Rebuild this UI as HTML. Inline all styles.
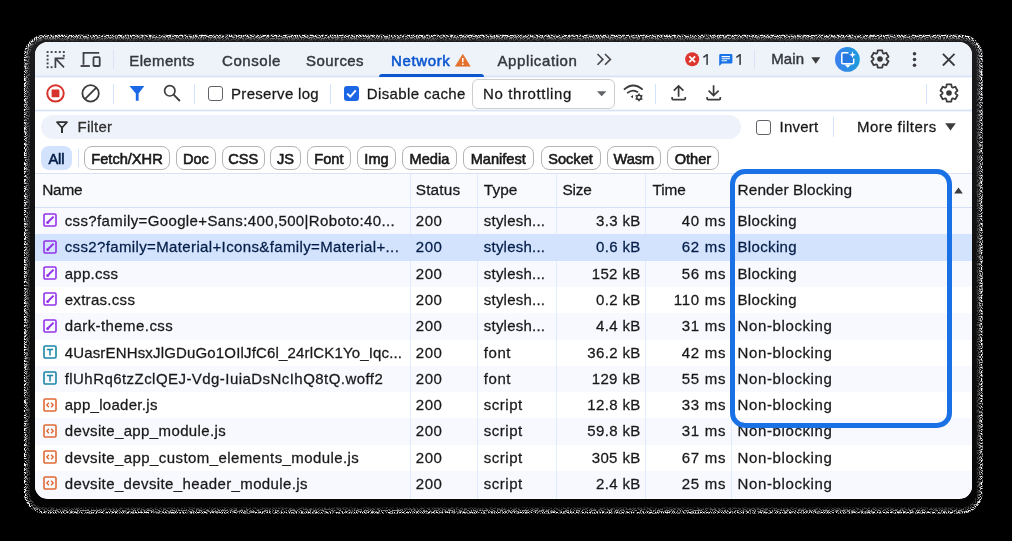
<!DOCTYPE html>
<html><head><meta charset="utf-8"><title>DevTools Network</title>
<style>
html,body{margin:0;padding:0;background:#000;}
body{width:1012px;height:541px;position:relative;overflow:hidden;font-family:"Liberation Sans",sans-serif;}
#shadow{position:absolute;left:24px;top:35px;width:958.5px;height:478px;border-radius:21px;background:linear-gradient(to bottom,#1d1d1f 0%,#161618 15%,#0a0a0b 85%,#030303 100%);}
#panel{position:absolute;left:35px;top:42px;width:937px;height:456.5px;border-radius:13px;background:#fff;overflow:hidden;}
.abs{position:absolute;}
#tabbar{left:0;top:0;width:937px;height:34px;background:#eef2f9;border-bottom:1px solid #d3e3fd;}
#toolbar{left:0;top:35px;width:937px;height:32.5px;background:#fff;border-bottom:1px solid #d3e3fd;}
.vsep{position:absolute;width:1px;background:#d3e3fd;}
.t{position:absolute;white-space:nowrap;line-height:20px;-webkit-text-stroke:0.26px currentColor;}
.pill{position:absolute;top:104px;height:22px;border:1px solid #c7c7c7;border-radius:8px;box-sizing:content-box;background:#fff;}
.row{position:absolute;left:0;width:937px;}
.cb{position:absolute;width:13px;height:13px;border:1.5px solid #5f6368;border-radius:3px;background:#fff;box-sizing:content-box;}
svg{position:absolute;overflow:visible;}
</style></head><body>
<div id="shadow"></div>
<svg style="left:0;top:0" width="1012" height="541" viewBox="0 0 1012 541">
<defs>
<filter id="nz" x="0" y="0" width="100%" height="100%" color-interpolation-filters="sRGB"><feTurbulence type="fractalNoise" baseFrequency="0.85" numOctaves="2" seed="7"/><feColorMatrix type="matrix" values="0 0 0 0 1  0 0 0 0 1  0 0 0 0 1  9 0 0 0 -4.05"/></filter>
<mask id="ring" maskUnits="userSpaceOnUse" x="0" y="0" width="1012" height="541">
<rect x="0" y="0" width="1012" height="541" fill="#000"/>
<rect x="28.6" y="39.2" width="949.3" height="469.6" rx="16.5" fill="none" stroke="#3a3a3a" stroke-width="2.4"/>
<rect x="26.6" y="37.4" width="953.3" height="473.4" rx="18.4" fill="none" stroke="#8a8a8a" stroke-width="2"/>
<rect x="24.9" y="35.8" width="956.7" height="476.8" rx="20.2" fill="none" stroke="#fff" stroke-width="1.9"/>
</mask>
</defs>
<g mask="url(#ring)"><rect x="0" y="0" width="1012" height="541" filter="url(#nz)" fill="#fff"/></g>
</svg>
<div id="panel">
<div class="abs" style="left:-35px;top:-42px;width:1012px;height:541px;will-change:transform;">
<div class="abs" style="left:35px;top:42px;width:937px;height:34.5px;background:#eef2f9;"></div>
<div class="abs" style="left:35px;top:75.0px;width:937px;height:3px;background:linear-gradient(to bottom,rgba(211,227,253,0),#d7e1f7 50%,rgba(211,227,253,0));"></div>
<div class="abs" style="left:35px;top:108.5px;width:937px;height:3px;background:linear-gradient(to bottom,rgba(211,227,253,0),#d7e1f7 50%,rgba(211,227,253,0));"></div>
<div class="abs" style="left:378.5px;top:74px;width:105.5px;height:3px;background:#0b57d0;border-radius:3px 3px 0 0;"></div>
<div class="vsep" style="left:113px;top:50px;height:19px;background:#d9e2f6"></div>
<div class="vsep" style="left:754px;top:50px;height:19px;background:#d9e2f6"></div>
<div class="vsep" style="left:113px;top:84px;height:20px;"></div>
<div class="vsep" style="left:194px;top:84px;height:20px;"></div>
<div class="vsep" style="left:330px;top:84px;height:20px;"></div>
<div class="vsep" style="left:655px;top:84px;height:20px;"></div>
<div class="vsep" style="left:926px;top:84px;height:20px;"></div>
<div class="vsep" style="left:833px;top:117px;height:20px;"></div>
<div class="vsep" style="left:78px;top:149px;height:18px;"></div>
<div class="abs" style="left:41px;top:115px;width:700px;height:24px;border-radius:12px;background:#eef2fa;"></div>
<div class="abs" style="left:471.75px;top:78.75px;width:141px;height:28px;border:1px solid #cbcdd1;border-radius:6px;background:#fff;"></div>
<div class="cb" style="left:208px;top:86px;"></div>
<div class="abs" style="left:343.75px;top:86px;width:15px;height:15px;border-radius:3px;background:#1b66e4;"></div>
<svg style="left:343.75px;top:86px" width="15" height="15" viewBox="0 0 15 15"><path d="M3.2 7.6 L6.3 10.6 L11.8 4.4" fill="none" stroke="#fff" stroke-width="2"/></svg>
<div class="cb" style="left:756px;top:119.5px;"></div>
<div class="abs" style="left:41px;top:146px;width:31px;height:24px;border-radius:8px;background:#d3e3fd;"></div>
<div class="abs" style="left:84px;top:146px;width:84px;height:22px;border:1px solid #b4b4b4;border-radius:8px;background:#fff;"></div>
<div class="abs" style="left:175.75px;top:146px;width:38.25px;height:22px;border:1px solid #b4b4b4;border-radius:8px;background:#fff;"></div>
<div class="abs" style="left:222px;top:146px;width:40.5px;height:22px;border:1px solid #b4b4b4;border-radius:8px;background:#fff;"></div>
<div class="abs" style="left:270px;top:146px;width:29px;height:22px;border:1px solid #b4b4b4;border-radius:8px;background:#fff;"></div>
<div class="abs" style="left:306.75px;top:146px;width:42.25px;height:22px;border:1px solid #b4b4b4;border-radius:8px;background:#fff;"></div>
<div class="abs" style="left:357px;top:146px;width:37px;height:22px;border:1px solid #b4b4b4;border-radius:8px;background:#fff;"></div>
<div class="abs" style="left:402px;top:146px;width:52.75px;height:22px;border:1px solid #b4b4b4;border-radius:8px;background:#fff;"></div>
<div class="abs" style="left:462.5px;top:146px;width:69.5px;height:22px;border:1px solid #b4b4b4;border-radius:8px;background:#fff;"></div>
<div class="abs" style="left:540.5px;top:146px;width:58.0px;height:22px;border:1px solid #b4b4b4;border-radius:8px;background:#fff;"></div>
<div class="abs" style="left:606.75px;top:146px;width:52.25px;height:22px;border:1px solid #b4b4b4;border-radius:8px;background:#fff;"></div>
<div class="abs" style="left:666.75px;top:146px;width:50.25px;height:22px;border:1px solid #b4b4b4;border-radius:8px;background:#fff;"></div>
<div class="abs" style="left:35px;top:173px;width:937px;height:1px;background:#d9e2f7;"></div>
<div class="abs" style="left:35px;top:174px;width:937px;height:33.3px;background:#f8fafd;"></div>
<div class="abs" style="left:35px;top:207.2px;width:937px;height:1px;background:#d6dff3;"></div>
<div class="abs" style="left:35px;top:208.00px;width:937px;height:26.60px;background:#f8f9fe;"></div>
<div class="abs" style="left:35px;top:234.30px;width:937px;height:26.60px;background:#d3e3fd;"></div>
<div class="abs" style="left:35px;top:260.60px;width:937px;height:26.60px;background:#f8f9fe;"></div>
<div class="abs" style="left:35px;top:286.90px;width:937px;height:26.60px;background:#ffffff;"></div>
<div class="abs" style="left:35px;top:313.20px;width:937px;height:26.60px;background:#f8f9fe;"></div>
<div class="abs" style="left:35px;top:339.50px;width:937px;height:26.60px;background:#ffffff;"></div>
<div class="abs" style="left:35px;top:365.80px;width:937px;height:26.60px;background:#f8f9fe;"></div>
<div class="abs" style="left:35px;top:392.10px;width:937px;height:26.60px;background:#ffffff;"></div>
<div class="abs" style="left:35px;top:418.40px;width:937px;height:26.60px;background:#f8f9fe;"></div>
<div class="abs" style="left:35px;top:444.70px;width:937px;height:26.60px;background:#ffffff;"></div>
<div class="abs" style="left:35px;top:471.00px;width:937px;height:26.60px;background:#f8f9fe;"></div>
<div class="vsep" style="left:409.5px;top:174px;height:330px;background:#d3e3fd;opacity:.65"></div>
<div class="vsep" style="left:477.0px;top:174px;height:330px;background:#d3e3fd;opacity:.65"></div>
<div class="vsep" style="left:556.0px;top:174px;height:330px;background:#d3e3fd;opacity:.65"></div>
<div class="vsep" style="left:645.25px;top:174px;height:330px;background:#d3e3fd;opacity:.65"></div>
<div class="vsep" style="left:730.5px;top:174px;height:330px;background:#d3e3fd;opacity:.65"></div>
<svg style="left:43.3px;top:213.40px" width="14" height="14" viewBox="0 0 14 14"><rect x="1" y="1" width="12" height="12" rx="1.3" fill="none" stroke="#9233ea" stroke-width="1.6"/><path d="M5.4 8.8 L10.6 3.6" stroke="#9233ea" stroke-width="2" fill="none"/><circle cx="4.7" cy="9.6" r="1.5" fill="#9233ea"/></svg>
<svg style="left:43.3px;top:239.70px" width="14" height="14" viewBox="0 0 14 14"><rect x="1" y="1" width="12" height="12" rx="1.3" fill="none" stroke="#9233ea" stroke-width="1.6"/><path d="M5.4 8.8 L10.6 3.6" stroke="#9233ea" stroke-width="2" fill="none"/><circle cx="4.7" cy="9.6" r="1.5" fill="#9233ea"/></svg>
<svg style="left:43.3px;top:266.00px" width="14" height="14" viewBox="0 0 14 14"><rect x="1" y="1" width="12" height="12" rx="1.3" fill="none" stroke="#9233ea" stroke-width="1.6"/><path d="M5.4 8.8 L10.6 3.6" stroke="#9233ea" stroke-width="2" fill="none"/><circle cx="4.7" cy="9.6" r="1.5" fill="#9233ea"/></svg>
<svg style="left:43.3px;top:292.30px" width="14" height="14" viewBox="0 0 14 14"><rect x="1" y="1" width="12" height="12" rx="1.3" fill="none" stroke="#9233ea" stroke-width="1.6"/><path d="M5.4 8.8 L10.6 3.6" stroke="#9233ea" stroke-width="2" fill="none"/><circle cx="4.7" cy="9.6" r="1.5" fill="#9233ea"/></svg>
<svg style="left:43.3px;top:318.60px" width="14" height="14" viewBox="0 0 14 14"><rect x="1" y="1" width="12" height="12" rx="1.3" fill="none" stroke="#9233ea" stroke-width="1.6"/><path d="M5.4 8.8 L10.6 3.6" stroke="#9233ea" stroke-width="2" fill="none"/><circle cx="4.7" cy="9.6" r="1.5" fill="#9233ea"/></svg>
<svg style="left:43.3px;top:344.90px" width="14" height="14" viewBox="0 0 14 14"><rect x="1" y="1" width="12" height="12" rx="1.3" fill="none" stroke="#1a86a6" stroke-width="1.6"/><path d="M3.9 4.5 H10.1 M7 4.5 V10.6" stroke="#1a86a6" stroke-width="1.5" fill="none"/></svg>
<svg style="left:43.3px;top:371.20px" width="14" height="14" viewBox="0 0 14 14"><rect x="1" y="1" width="12" height="12" rx="1.3" fill="none" stroke="#1a86a6" stroke-width="1.6"/><path d="M3.9 4.5 H10.1 M7 4.5 V10.6" stroke="#1a86a6" stroke-width="1.5" fill="none"/></svg>
<svg style="left:43.3px;top:397.50px" width="14" height="14" viewBox="0 0 14 14"><rect x="1" y="1" width="12" height="12" rx="1.3" fill="none" stroke="#df6a36" stroke-width="1.6"/><path d="M5.9 4.8 L3.8 7 L5.9 9.2 M8.1 4.8 L10.2 7 L8.1 9.2" stroke="#df6a36" stroke-width="1.4" fill="none"/></svg>
<svg style="left:43.3px;top:423.80px" width="14" height="14" viewBox="0 0 14 14"><rect x="1" y="1" width="12" height="12" rx="1.3" fill="none" stroke="#df6a36" stroke-width="1.6"/><path d="M5.9 4.8 L3.8 7 L5.9 9.2 M8.1 4.8 L10.2 7 L8.1 9.2" stroke="#df6a36" stroke-width="1.4" fill="none"/></svg>
<svg style="left:43.3px;top:450.10px" width="14" height="14" viewBox="0 0 14 14"><rect x="1" y="1" width="12" height="12" rx="1.3" fill="none" stroke="#df6a36" stroke-width="1.6"/><path d="M5.9 4.8 L3.8 7 L5.9 9.2 M8.1 4.8 L10.2 7 L8.1 9.2" stroke="#df6a36" stroke-width="1.4" fill="none"/></svg>
<svg style="left:43.3px;top:476.40px" width="14" height="14" viewBox="0 0 14 14"><rect x="1" y="1" width="12" height="12" rx="1.3" fill="none" stroke="#df6a36" stroke-width="1.6"/><path d="M5.9 4.8 L3.8 7 L5.9 9.2 M8.1 4.8 L10.2 7 L8.1 9.2" stroke="#df6a36" stroke-width="1.4" fill="none"/></svg>
<!-- inspect/select icon -->
<svg style="left:46px;top:50px" width="20" height="19" viewBox="0 0 20 19"><rect x="0.65" y="1.05" width="1.9" height="1.9" fill="#3f4145"/><rect x="4.65" y="1.05" width="1.9" height="1.9" fill="#3f4145"/><rect x="8.75" y="1.05" width="1.9" height="1.9" fill="#3f4145"/><rect x="12.85" y="1.05" width="1.9" height="1.9" fill="#3f4145"/><rect x="16.85" y="1.05" width="1.9" height="1.9" fill="#3f4145"/><rect x="0.65" y="4.85" width="1.9" height="1.9" fill="#3f4145"/><rect x="0.65" y="8.65" width="1.9" height="1.9" fill="#3f4145"/><rect x="0.65" y="12.45" width="1.9" height="1.9" fill="#3f4145"/><rect x="0.65" y="16.25" width="1.9" height="1.9" fill="#3f4145"/><rect x="16.85" y="4.85" width="1.9" height="1.9" fill="#3f4145"/><rect x="4.65" y="16.25" width="1.9" height="1.9" fill="#3f4145"/><path d="M18.4 8.4 H9.4 V17.9 M9.6 8.6 L18 17.4" fill="none" stroke="#3f4145" stroke-width="1.7"/></svg>
<!-- device icon -->
<svg style="left:80px;top:51px" width="22" height="17" viewBox="0 0 22 17"><path d="M19.2 1.9 H3.5 V13.8" fill="none" stroke="#3f4145" stroke-width="1.8"/><path d="M0.6 15 H9.8" fill="none" stroke="#3f4145" stroke-width="1.9"/><rect x="13.5" y="6.1" width="6.2" height="8.9" rx="0.8" fill="none" stroke="#3f4145" stroke-width="1.8"/></svg>
<!-- record -->
<svg style="left:45px;top:83px" width="21" height="21" viewBox="0 0 21 21"><circle cx="10.5" cy="10.4" r="8.2" fill="none" stroke="#d8322c" stroke-width="2"/><rect x="6.6" y="6.5" width="7.8" height="7.8" rx="0.6" fill="#d8322c"/></svg>
<!-- clear -->
<svg style="left:80px;top:83px" width="21" height="21" viewBox="0 0 21 21"><circle cx="10.6" cy="10.4" r="8.2" fill="none" stroke="#3c3c3c" stroke-width="1.8"/><path d="M4.9 16.1 L16.3 4.7" stroke="#3c3c3c" stroke-width="1.8"/></svg>
<!-- funnel filled -->
<svg style="left:129px;top:85px" width="16" height="17" viewBox="0 0 16 17"><path d="M0.5 1 H15.3 L9.6 8.6 V15.8 H6.8 V8.6 Z" fill="#1a68e8"/></svg>
<!-- search -->
<svg style="left:163px;top:84px" width="19" height="19" viewBox="0 0 19 19"><circle cx="6.8" cy="6.8" r="5.2" fill="none" stroke="#3c3c3c" stroke-width="1.7"/><path d="M10.6 10.6 L16.9 17" stroke="#3c3c3c" stroke-width="1.8"/></svg>
<!-- more tabs >> -->
<svg style="left:596px;top:53px" width="17" height="13" viewBox="0 0 17 13"><path d="M1.5 1 L6.9 6.4 L1.5 11.8 M9 1 L14.4 6.4 L9 11.8" fill="none" stroke="#474747" stroke-width="1.6"/></svg>
<!-- error -->
<svg style="left:685px;top:51.6px" width="15" height="15" viewBox="0 0 15 15"><circle cx="7.2" cy="7.2" r="7" fill="#dc362e"/><path d="M4.3 4.3 L10.1 10.1 M10.1 4.3 L4.3 10.1" stroke="#fff" stroke-width="1.7"/></svg>
<!-- message -->
<svg style="left:719px;top:53.5px" width="14" height="13" viewBox="0 0 14 13"><path d="M1.4 0 H12.2 Q13.4 0 13.4 1.2 V8.2 Q13.4 9.4 12.2 9.4 H3 L0.2 12 V1.2 Q0.2 0 1.4 0 Z" fill="#1a73e8"/><path d="M2.6 2.6 H11 M2.6 4.7 H11 M2.6 6.8 H8" stroke="#fff" stroke-width="1.1"/></svg>
<!-- Main caret -->
<svg style="left:811.2px;top:56.8px" width="10" height="7" viewBox="0 0 10 7"><path d="M0.3 0.2 H9.3 L4.8 6.8 Z" fill="#3c3c3c"/></svg>
<!-- AI assistance circle -->
<svg style="left:834.5px;top:47px" width="24.8" height="24.8" viewBox="0 0 25.2 25.2"><defs><linearGradient id="aig" x1="0" y1="0" x2="1" y2="0"><stop offset="0" stop-color="#3d80ee"/><stop offset="1" stop-color="#1c9bdc"/></linearGradient></defs><circle cx="12.6" cy="12.6" r="12.6" fill="url(#aig)"/><rect x="7.6" y="6.6" width="11" height="10" fill="#1f5fd6" opacity=".45"/><path d="M13.6 5.8 H7.9 Q6.9 5.8 6.9 6.8 V16 Q6.9 17 7.9 17 H18 Q19 17 19 16 V11.6" fill="none" stroke="#fff" stroke-width="1.5"/><path d="M9.7 17.8 H16.3 L13 21 Z" fill="#fff"/><path d="M17.8 4.4 L18.7 7 L21.3 7.9 L18.7 8.8 L17.8 11.4 L16.9 8.8 L14.3 7.9 L16.9 7 Z" fill="#fff"/></svg>
<!-- gears -->
<svg style="left:867.6px;top:47.4px" width="24" height="24" viewBox="0 0 24 24"><path d="M14.75 6.11 L14.29 3.45 L9.71 3.45 L9.25 6.11 L8.27 6.68 L5.74 5.74 L3.45 9.71 L5.52 11.43 L5.52 12.57 L3.45 14.29 L5.74 18.26 L8.27 17.32 L9.25 17.89 L9.71 20.55 L14.29 20.55 L14.75 17.89 L15.73 17.32 L18.26 18.26 L20.55 14.29 L18.48 12.57 L18.48 11.43 L20.55 9.71 L18.26 5.74 L15.73 6.68 Z" fill="none" stroke="#3a3a3c" stroke-width="1.75" stroke-linejoin="round"/><circle cx="12" cy="12" r="2.8" fill="#3a3a3c"/></svg>
<svg style="left:936.6px;top:81.4px" width="24" height="24" viewBox="0 0 24 24"><path d="M14.75 6.11 L14.29 3.45 L9.71 3.45 L9.25 6.11 L8.27 6.68 L5.74 5.74 L3.45 9.71 L5.52 11.43 L5.52 12.57 L3.45 14.29 L5.74 18.26 L8.27 17.32 L9.25 17.89 L9.71 20.55 L14.29 20.55 L14.75 17.89 L15.73 17.32 L18.26 18.26 L20.55 14.29 L18.48 12.57 L18.48 11.43 L20.55 9.71 L18.26 5.74 L15.73 6.68 Z" fill="none" stroke="#3a3a3c" stroke-width="1.75" stroke-linejoin="round"/><circle cx="12" cy="12" r="2.8" fill="#3a3a3c"/></svg>
<!-- kebab -->
<svg style="left:912px;top:52px" width="5" height="16" viewBox="0 0 5 16"><circle cx="2.5" cy="1.7" r="1.75" fill="#3a3a3c"/><circle cx="2.5" cy="7.4" r="1.75" fill="#3a3a3c"/><circle cx="2.5" cy="13.2" r="1.75" fill="#3a3a3c"/></svg>
<!-- close -->
<svg style="left:942px;top:52.6px" width="14" height="14" viewBox="0 0 14 14"><path d="M0.9 0.9 L12.5 12.5 M12.5 0.9 L0.9 12.5" stroke="#3a3a3c" stroke-width="1.8"/></svg>
<!-- select caret -->
<svg style="left:597px;top:91px" width="10" height="6" viewBox="0 0 10 6"><path d="M0 0.2 H9.4 L4.7 5.2 Z" fill="#5f6368"/></svg>
<!-- wifi settings -->
<svg style="left:622.5px;top:84px" width="21" height="17" viewBox="0 0 21 17"><path d="M0.9 5.6 Q10.3 -2.6 19.7 5.6" fill="none" stroke="#3a3a3c" stroke-width="1.7"/><path d="M4.2 9.2 Q9.6 4.4 15 8.2" fill="none" stroke="#3a3a3c" stroke-width="1.7"/><path d="M7.6 12.7 L10 11.1 V14.3 Z" fill="#3a3a3c"/><circle cx="16" cy="13.4" r="2.2" fill="none" stroke="#3a3a3c" stroke-width="1.5"/><path d="M16 9.5 V10.9 M16 15.9 V17.3 M12.6 11.45 L13.8 12.15 M18.2 14.65 L19.4 15.35 M12.6 15.35 L13.8 14.65 M18.2 12.15 L19.4 11.45" stroke="#3a3a3c" stroke-width="1.6"/></svg>
<!-- upload -->
<svg style="left:671px;top:85px" width="16" height="16" viewBox="0 0 16 16"><path d="M7.6 11.7 V1.4 M2.8 5.6 L7.6 0.9 L12.4 5.6" fill="none" stroke="#3a3a3c" stroke-width="1.7"/><path d="M1.1 12 V13.6 Q1.1 14.6 2.1 14.6 H13.3 Q14.3 14.6 14.3 13.6 V12" fill="none" stroke="#3a3a3c" stroke-width="1.7"/></svg>
<!-- download -->
<svg style="left:706px;top:85px" width="16" height="16" viewBox="0 0 16 16"><path d="M7.6 0.2 V10 M2.6 5.6 L7.6 10.5 L12.6 5.6" fill="none" stroke="#3a3a3c" stroke-width="1.7"/><path d="M1.1 12 V13.6 Q1.1 14.6 2.1 14.6 H13.3 Q14.3 14.6 14.3 13.6 V12" fill="none" stroke="#3a3a3c" stroke-width="1.7"/></svg>
<!-- warning triangle -->
<svg style="left:455px;top:54px" width="16" height="13" viewBox="0 0 16 13"><path d="M7.8 0.3 L15.2 12.2 H0.4 Z" fill="#e4702d" stroke="#e4702d" stroke-width="0.6" stroke-linejoin="round"/><path d="M7.8 4 V8.2" stroke="#fff" stroke-width="1.5"/><circle cx="7.8" cy="10.2" r="0.9" fill="#fff"/></svg>
<!-- filter outline funnel -->
<svg style="left:56px;top:121px" width="12" height="13" viewBox="0 0 12 13"><path d="M1 1.1 H11 L6 6.8 Z" fill="none" stroke="#303030" stroke-width="1.7" stroke-linejoin="round"/><path d="M6 6.4 V12" stroke="#303030" stroke-width="2"/></svg>
<!-- more filters caret -->
<svg style="left:945px;top:123px" width="11" height="8" viewBox="0 0 11 8"><path d="M0.2 0.2 H10.8 L5.5 7.6 Z" fill="#3c3c3c"/></svg>
<!-- sort arrow -->
<svg style="left:954px;top:187.2px" width="9" height="7" viewBox="0 0 9 7"><path d="M4.5 0.4 L8.8 6.6 H0.2 Z" fill="#3c3c3c"/></svg>
<!-- counters -->
<svg style="left:703px;top:53.8px" width="6" height="11" viewBox="0 0 6 11"><path d="M0.4 3.3 L3.7 0.9" stroke="#34373c" stroke-width="1.5" fill="none"/><rect x="3.35" y="0" width="1.5" height="10.9" fill="#34373c"/></svg>
<svg style="left:735.8px;top:53.8px" width="6" height="11" viewBox="0 0 6 11"><path d="M0.4 3.3 L3.7 0.9" stroke="#34373c" stroke-width="1.5" fill="none"/><rect x="3.35" y="0" width="1.5" height="10.9" fill="#34373c"/></svg>

<div class="t" style="top:50.50px;font-size:15px;color:#34373c;-webkit-text-stroke:0.42px currentColor;letter-spacing:0.359px;left:129.30px;">Elements</div>
<div class="t" style="top:50.50px;font-size:15px;color:#34373c;-webkit-text-stroke:0.42px currentColor;letter-spacing:0.565px;left:222.00px;">Console</div>
<div class="t" style="top:50.50px;font-size:15px;color:#34373c;-webkit-text-stroke:0.42px currentColor;letter-spacing:0.424px;left:306.00px;">Sources</div>
<div class="t" style="top:50.50px;font-size:15px;color:#0b57d0;-webkit-text-stroke:0.55px currentColor;letter-spacing:0.641px;left:391.00px;">Network</div>
<div class="t" style="top:50.50px;font-size:15px;color:#34373c;-webkit-text-stroke:0.42px currentColor;letter-spacing:0.601px;left:497.50px;">Application</div>
<div class="t" style="top:49.30px;font-size:15px;color:#34373c;-webkit-text-stroke:0.42px currentColor;letter-spacing:0.071px;left:771.30px;">Main</div>
<div class="t" style="top:84.10px;font-size:15px;color:#191919;letter-spacing:0.315px;left:231.00px;">Preserve log</div>
<div class="t" style="top:84.10px;font-size:15px;color:#191919;letter-spacing:0.368px;left:366.75px;">Disable cache</div>
<div class="t" style="top:84.10px;font-size:15px;color:#191919;letter-spacing:0.625px;left:483.00px;">No throttling</div>
<div class="t" style="top:117.30px;font-size:15px;color:#303030;letter-spacing:0.243px;left:77.50px;">Filter</div>
<div class="t" style="top:117.30px;font-size:15px;color:#191919;letter-spacing:0.247px;left:779.50px;">Invert</div>
<div class="t" style="top:117.30px;font-size:15px;color:#191919;letter-spacing:0.451px;left:857.00px;">More filters</div>
<div class="t" style="top:148.54px;font-size:14.6px;color:#041e49;-webkit-text-stroke:0.6px currentColor;left:-43.50px;width:200px;text-align:center;">All</div>
<div class="t" style="top:148.54px;font-size:14.6px;color:#191919;-webkit-text-stroke:0.6px currentColor;left:27.00px;width:200px;text-align:center;">Fetch/XHR</div>
<div class="t" style="top:148.54px;font-size:14.6px;color:#191919;-webkit-text-stroke:0.6px currentColor;left:95.88px;width:200px;text-align:center;">Doc</div>
<div class="t" style="top:148.54px;font-size:14.6px;color:#191919;-webkit-text-stroke:0.6px currentColor;left:143.25px;width:200px;text-align:center;">CSS</div>
<div class="t" style="top:148.54px;font-size:14.6px;color:#191919;-webkit-text-stroke:0.6px currentColor;left:185.50px;width:200px;text-align:center;">JS</div>
<div class="t" style="top:148.54px;font-size:14.6px;color:#191919;-webkit-text-stroke:0.6px currentColor;left:228.88px;width:200px;text-align:center;">Font</div>
<div class="t" style="top:148.54px;font-size:14.6px;color:#191919;-webkit-text-stroke:0.6px currentColor;left:276.50px;width:200px;text-align:center;">Img</div>
<div class="t" style="top:148.54px;font-size:14.6px;color:#191919;-webkit-text-stroke:0.6px currentColor;left:329.38px;width:200px;text-align:center;">Media</div>
<div class="t" style="top:148.54px;font-size:14.6px;color:#191919;-webkit-text-stroke:0.6px currentColor;left:398.25px;width:200px;text-align:center;">Manifest</div>
<div class="t" style="top:148.54px;font-size:14.6px;color:#191919;-webkit-text-stroke:0.6px currentColor;left:470.50px;width:200px;text-align:center;">Socket</div>
<div class="t" style="top:148.54px;font-size:14.6px;color:#191919;-webkit-text-stroke:0.6px currentColor;left:533.88px;width:200px;text-align:center;">Wasm</div>
<div class="t" style="top:148.54px;font-size:14.6px;color:#191919;-webkit-text-stroke:0.6px currentColor;left:592.88px;width:200px;text-align:center;">Other</div>
<div class="t" style="top:180.36px;font-size:15.4px;color:#191919;letter-spacing:-0.191px;left:42.20px;">Name</div>
<div class="t" style="top:180.36px;font-size:15.4px;color:#191919;letter-spacing:0.193px;left:415.70px;">Status</div>
<div class="t" style="top:180.36px;font-size:15.4px;color:#191919;letter-spacing:0.081px;left:483.75px;">Type</div>
<div class="t" style="top:180.36px;font-size:15.4px;color:#191919;letter-spacing:-0.188px;left:562.50px;">Size</div>
<div class="t" style="top:180.36px;font-size:15.4px;color:#191919;letter-spacing:-0.110px;left:652.50px;">Time</div>
<div class="t" style="top:180.36px;font-size:15.4px;color:#191919;letter-spacing:0.118px;left:737.50px;">Render Blocking</div>
<div class="t" style="top:211.00px;font-size:15px;color:#191919;letter-spacing:0.381px;left:64.70px;">css?family=Google+Sans:400,500|Roboto:40...</div>
<div class="t" style="top:211.00px;font-size:15px;color:#191919;letter-spacing:0.573px;left:415.75px;">200</div>
<div class="t" style="top:211.00px;font-size:15px;color:#191919;letter-spacing:0.231px;left:483.75px;">stylesh...</div>
<div class="t" style="top:211.00px;font-size:15px;color:#191919;letter-spacing:0.354px;right:371.35px;">3.3 kB</div>
<div class="t" style="top:211.00px;font-size:15px;color:#191919;letter-spacing:0.735px;right:285.76px;">40 ms</div>
<div class="t" style="top:211.00px;font-size:15px;color:#191919;letter-spacing:0.350px;left:737.50px;">Blocking</div>
<div class="t" style="top:237.30px;font-size:15px;color:#041e49;letter-spacing:0.367px;left:64.70px;">css2?family=Material+Icons&amp;family=Material+...</div>
<div class="t" style="top:237.30px;font-size:15px;color:#041e49;letter-spacing:0.573px;left:415.75px;">200</div>
<div class="t" style="top:237.30px;font-size:15px;color:#041e49;letter-spacing:0.231px;left:483.75px;">stylesh...</div>
<div class="t" style="top:237.30px;font-size:15px;color:#041e49;letter-spacing:0.354px;right:371.35px;">0.6 kB</div>
<div class="t" style="top:237.30px;font-size:15px;color:#041e49;letter-spacing:0.735px;right:285.76px;">62 ms</div>
<div class="t" style="top:237.30px;font-size:15px;color:#041e49;letter-spacing:0.350px;left:737.50px;">Blocking</div>
<div class="t" style="top:263.60px;font-size:15px;color:#191919;letter-spacing:0.257px;left:64.70px;">app.css</div>
<div class="t" style="top:263.60px;font-size:15px;color:#191919;letter-spacing:0.573px;left:415.75px;">200</div>
<div class="t" style="top:263.60px;font-size:15px;color:#191919;letter-spacing:0.231px;left:483.75px;">stylesh...</div>
<div class="t" style="top:263.60px;font-size:15px;color:#191919;letter-spacing:0.389px;right:371.31px;">152 kB</div>
<div class="t" style="top:263.60px;font-size:15px;color:#191919;letter-spacing:0.735px;right:285.76px;">56 ms</div>
<div class="t" style="top:263.60px;font-size:15px;color:#191919;letter-spacing:0.350px;left:737.50px;">Blocking</div>
<div class="t" style="top:289.90px;font-size:15px;color:#191919;letter-spacing:0.298px;left:64.70px;">extras.css</div>
<div class="t" style="top:289.90px;font-size:15px;color:#191919;letter-spacing:0.573px;left:415.75px;">200</div>
<div class="t" style="top:289.90px;font-size:15px;color:#191919;letter-spacing:0.231px;left:483.75px;">stylesh...</div>
<div class="t" style="top:289.90px;font-size:15px;color:#191919;letter-spacing:0.354px;right:371.35px;">0.2 kB</div>
<div class="t" style="top:289.90px;font-size:15px;color:#191919;letter-spacing:0.721px;right:285.78px;">110 ms</div>
<div class="t" style="top:289.90px;font-size:15px;color:#191919;letter-spacing:0.350px;left:737.50px;">Blocking</div>
<div class="t" style="top:316.20px;font-size:15px;color:#191919;letter-spacing:0.425px;left:64.70px;">dark-theme.css</div>
<div class="t" style="top:316.20px;font-size:15px;color:#191919;letter-spacing:0.573px;left:415.75px;">200</div>
<div class="t" style="top:316.20px;font-size:15px;color:#191919;letter-spacing:0.231px;left:483.75px;">stylesh...</div>
<div class="t" style="top:316.20px;font-size:15px;color:#191919;letter-spacing:0.354px;right:371.35px;">4.4 kB</div>
<div class="t" style="top:316.20px;font-size:15px;color:#191919;letter-spacing:0.735px;right:285.76px;">31 ms</div>
<div class="t" style="top:316.20px;font-size:15px;color:#191919;letter-spacing:0.621px;left:737.50px;">Non-blocking</div>
<div class="t" style="top:342.50px;font-size:15px;color:#191919;letter-spacing:0.165px;left:64.70px;">4UasrENHsxJlGDuGo1OIlJfC6l_24rlCK1Yo_Iqc...</div>
<div class="t" style="top:342.50px;font-size:15px;color:#191919;letter-spacing:0.573px;left:415.75px;">200</div>
<div class="t" style="top:342.50px;font-size:15px;color:#191919;letter-spacing:0.563px;left:483.75px;">font</div>
<div class="t" style="top:342.50px;font-size:15px;color:#191919;letter-spacing:0.363px;right:371.34px;">36.2 kB</div>
<div class="t" style="top:342.50px;font-size:15px;color:#191919;letter-spacing:0.735px;right:285.76px;">42 ms</div>
<div class="t" style="top:342.50px;font-size:15px;color:#191919;letter-spacing:0.621px;left:737.50px;">Non-blocking</div>
<div class="t" style="top:368.80px;font-size:15px;color:#191919;letter-spacing:0.446px;left:64.70px;">flUhRq6tzZclQEJ-Vdg-IuiaDsNcIhQ8tQ.woff2</div>
<div class="t" style="top:368.80px;font-size:15px;color:#191919;letter-spacing:0.573px;left:415.75px;">200</div>
<div class="t" style="top:368.80px;font-size:15px;color:#191919;letter-spacing:0.563px;left:483.75px;">font</div>
<div class="t" style="top:368.80px;font-size:15px;color:#191919;letter-spacing:0.389px;right:371.31px;">129 kB</div>
<div class="t" style="top:368.80px;font-size:15px;color:#191919;letter-spacing:0.735px;right:285.76px;">55 ms</div>
<div class="t" style="top:368.80px;font-size:15px;color:#191919;letter-spacing:0.621px;left:737.50px;">Non-blocking</div>
<div class="t" style="top:395.10px;font-size:15px;color:#191919;letter-spacing:0.288px;left:64.70px;">app_loader.js</div>
<div class="t" style="top:395.10px;font-size:15px;color:#191919;letter-spacing:0.573px;left:415.75px;">200</div>
<div class="t" style="top:395.10px;font-size:15px;color:#191919;letter-spacing:0.538px;left:483.75px;">script</div>
<div class="t" style="top:395.10px;font-size:15px;color:#191919;letter-spacing:0.363px;right:371.34px;">12.8 kB</div>
<div class="t" style="top:395.10px;font-size:15px;color:#191919;letter-spacing:0.735px;right:285.76px;">33 ms</div>
<div class="t" style="top:395.10px;font-size:15px;color:#191919;letter-spacing:0.621px;left:737.50px;">Non-blocking</div>
<div class="t" style="top:421.40px;font-size:15px;color:#191919;letter-spacing:0.384px;left:64.70px;">devsite_app_module.js</div>
<div class="t" style="top:421.40px;font-size:15px;color:#191919;letter-spacing:0.573px;left:415.75px;">200</div>
<div class="t" style="top:421.40px;font-size:15px;color:#191919;letter-spacing:0.538px;left:483.75px;">script</div>
<div class="t" style="top:421.40px;font-size:15px;color:#191919;letter-spacing:0.363px;right:371.34px;">59.8 kB</div>
<div class="t" style="top:421.40px;font-size:15px;color:#191919;letter-spacing:0.735px;right:285.76px;">31 ms</div>
<div class="t" style="top:421.40px;font-size:15px;color:#191919;letter-spacing:0.621px;left:737.50px;">Non-blocking</div>
<div class="t" style="top:447.70px;font-size:15px;color:#191919;letter-spacing:0.410px;left:64.70px;">devsite_app_custom_elements_module.js</div>
<div class="t" style="top:447.70px;font-size:15px;color:#191919;letter-spacing:0.573px;left:415.75px;">200</div>
<div class="t" style="top:447.70px;font-size:15px;color:#191919;letter-spacing:0.538px;left:483.75px;">script</div>
<div class="t" style="top:447.70px;font-size:15px;color:#191919;letter-spacing:0.389px;right:371.31px;">305 kB</div>
<div class="t" style="top:447.70px;font-size:15px;color:#191919;letter-spacing:0.735px;right:285.76px;">67 ms</div>
<div class="t" style="top:447.70px;font-size:15px;color:#191919;letter-spacing:0.621px;left:737.50px;">Non-blocking</div>
<div class="t" style="top:474.00px;font-size:15px;color:#191919;letter-spacing:0.382px;left:64.70px;">devsite_devsite_header_module.js</div>
<div class="t" style="top:474.00px;font-size:15px;color:#191919;letter-spacing:0.573px;left:415.75px;">200</div>
<div class="t" style="top:474.00px;font-size:15px;color:#191919;letter-spacing:0.538px;left:483.75px;">script</div>
<div class="t" style="top:474.00px;font-size:15px;color:#191919;letter-spacing:0.354px;right:371.35px;">2.4 kB</div>
<div class="t" style="top:474.00px;font-size:15px;color:#191919;letter-spacing:0.735px;right:285.76px;">25 ms</div>
<div class="t" style="top:474.00px;font-size:15px;color:#191919;letter-spacing:0.621px;left:737.50px;">Non-blocking</div>
</div>
</div>
<div class="abs" style="left:730px;top:168.9px;width:212.3px;height:249.2px;border:5.7px solid #1a71e6;border-radius:15px;"></div>
</body></html>
